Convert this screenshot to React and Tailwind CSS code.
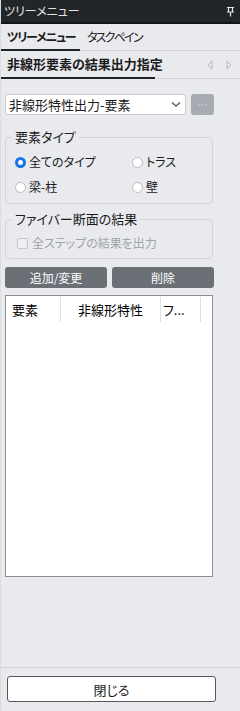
import React from "react";

const font = {
  fontFamily: '"Noto Sans CJK JP", "Noto Sans", sans-serif',
};

const Radio = ({ checked, label }) => (
  <label className="flex items-center gap-[3px] h-[20px]">
    <span
      className={
        checked
          ? "w-[11px] h-[11px] rounded-full border-[3px] border-[#1a73e8] bg-white"
          : "w-[11px] h-[11px] rounded-full border border-[#b8bbc0] bg-white"
      }
    />
    <span>{label}</span>
  </label>
);

const App = () => {
  return (
    <div
      className="w-[240px] h-[711px] bg-[#e9eaee] text-[12px] text-[#1b1b1b] flex flex-col border-l border-[#dcdde1] [font-feature-settings:'palt'] overflow-hidden"
      style={font}
    >
      {/* title bar */}
      <div className="h-[24px] bg-[#22262b] border-b-2 border-[#121417] flex items-center justify-between pl-[3px] pr-[5px] text-[#e4e4e4]">
        <span className="leading-none">ツリーメニュー</span>
        <svg width="9" height="11" viewBox="0 0 9 11" className="text-[#e4e4e4]">
          <path d="M1 1.5h7M2.5 1.5v4.5M6.5 1.5v4.5M1 6h7M4.5 6v4.5" stroke="currentColor" strokeWidth="1.2" fill="none" />
        </svg>
      </div>

      {/* tabs */}
      <div className="flex h-[27px]">
        <div className="w-[79px] flex items-center pl-[6px] font-bold border-b-2 border-[#1f2328] whitespace-nowrap tracking-[-1.3px]">
          ツリーメニュー
        </div>
        <div className="flex-1 flex items-center pl-[7px] border-b border-[#d3d5d9] whitespace-nowrap tracking-[-1.8px]">
          タスクペイン
        </div>
      </div>

      {/* section header */}
      <div className="flex h-[28px]">
        <div className="w-[154px] flex items-center pl-[6px] text-[13px] font-bold border-b-2 border-[#1f2328] whitespace-nowrap">
          非線形要素の結果出力指定
        </div>
        <div className="flex-1 flex items-center justify-end gap-[13px] pr-[8px] border-b border-[#d3d5d9]">
          <svg width="6" height="10" viewBox="0 0 6 10">
            <path d="M5 1L1 5L5 9Z" stroke="#b3b6bb" fill="none" strokeWidth="1" />
          </svg>
          <svg width="6" height="10" viewBox="0 0 6 10">
            <path d="M1 1L5 5L1 9Z" stroke="#b3b6bb" fill="none" strokeWidth="1" />
          </svg>
        </div>
      </div>

      <div className="px-[4px]">
        {/* select */}
        <div className="flex mt-[15px] gap-[5px]">
          <div className="w-[181px] h-[21px] bg-white border border-[#c9cbd0] rounded-[3px] flex items-center justify-between pl-[3px] pr-[4px]">
            <span className="text-[13px] leading-none">非線形特性出力-要素</span>
            <svg width="10" height="7" viewBox="0 0 10 7">
              <path d="M1 1.5L5 5L9 1.5" stroke="#5f6268" strokeWidth="1.6" fill="none" />
            </svg>
          </div>
          <button className="w-[23px] h-[21px] bg-[#a6abb1] rounded-[3px] text-[#c9ccd1] text-[11px] leading-none flex items-center justify-center">
            …
          </button>
        </div>

        {/* element type */}
        <fieldset className="mt-[15px] w-[208px] border border-[#d3d5d9] rounded-[4px]">
          <legend className="ml-[6px] px-[3px] leading-[14px] text-[13px]">要素タイプ</legend>
          <div className="grid grid-cols-[117px_1fr] gap-y-[5px] pl-[9px] pt-[8px] pb-[6px]">
            <Radio checked label="全てのタイプ" />
            <Radio label="トラス" />
            <Radio label="梁-柱" />
            <Radio label="壁" />
          </div>
        </fieldset>

        {/* fiber section */}
        <fieldset className="mt-[8px] w-[208px] border border-[#d3d5d9] rounded-[4px]">
          <legend className="ml-[6px] px-[3px] leading-[14px] text-[13px]">ファイバー断面の結果</legend>
          <label className="flex items-center gap-[4px] h-[20px] pl-[11px] mt-[7px] mb-[5px] text-[#a0a3a8]">
            <span className="w-[11px] h-[11px] rounded-[2px] border border-[#c3c5ca] bg-[#eeeff2]" />
            全ステップの結果を出力
          </label>
        </fieldset>

        {/* buttons */}
        <div className="flex gap-[5px] mt-[8px]">
          <button className="w-[102px] h-[21px] bg-[#6b7077] text-white rounded-[3px] leading-none">
            追加/変更
          </button>
          <button className="w-[102px] h-[21px] bg-[#6b7077] text-white rounded-[3px] leading-none">
            削除
          </button>
        </div>

        {/* table */}
        <div className="mt-[7px] w-[208px] h-[282px] bg-white border border-[#8d8f95]">
          <div className="flex h-[25px] mt-[1px] text-[13px] text-black">
            <div className="w-[55px] flex items-center pl-[6px] border-r border-[#dedfe2]">要素</div>
            <div className="w-[100px] flex items-center justify-center border-r border-[#dedfe2]">非線形特性</div>
            <div className="w-[40px] flex items-center pl-[2px] border-r border-[#dedfe2] overflow-hidden whitespace-nowrap">
              フ...
            </div>
          </div>
        </div>
      </div>

      <div className="flex-1" />

      {/* footer */}
      <div className="border-t border-[#d3d5d9] h-[44px] pt-[8px] px-[6px]">
        <button className="w-[209px] h-[26px] bg-white border border-[#55585e] rounded-[3px] text-[13px] leading-none">
          閉じる
        </button>
      </div>
    </div>
  );
};

export default App;
